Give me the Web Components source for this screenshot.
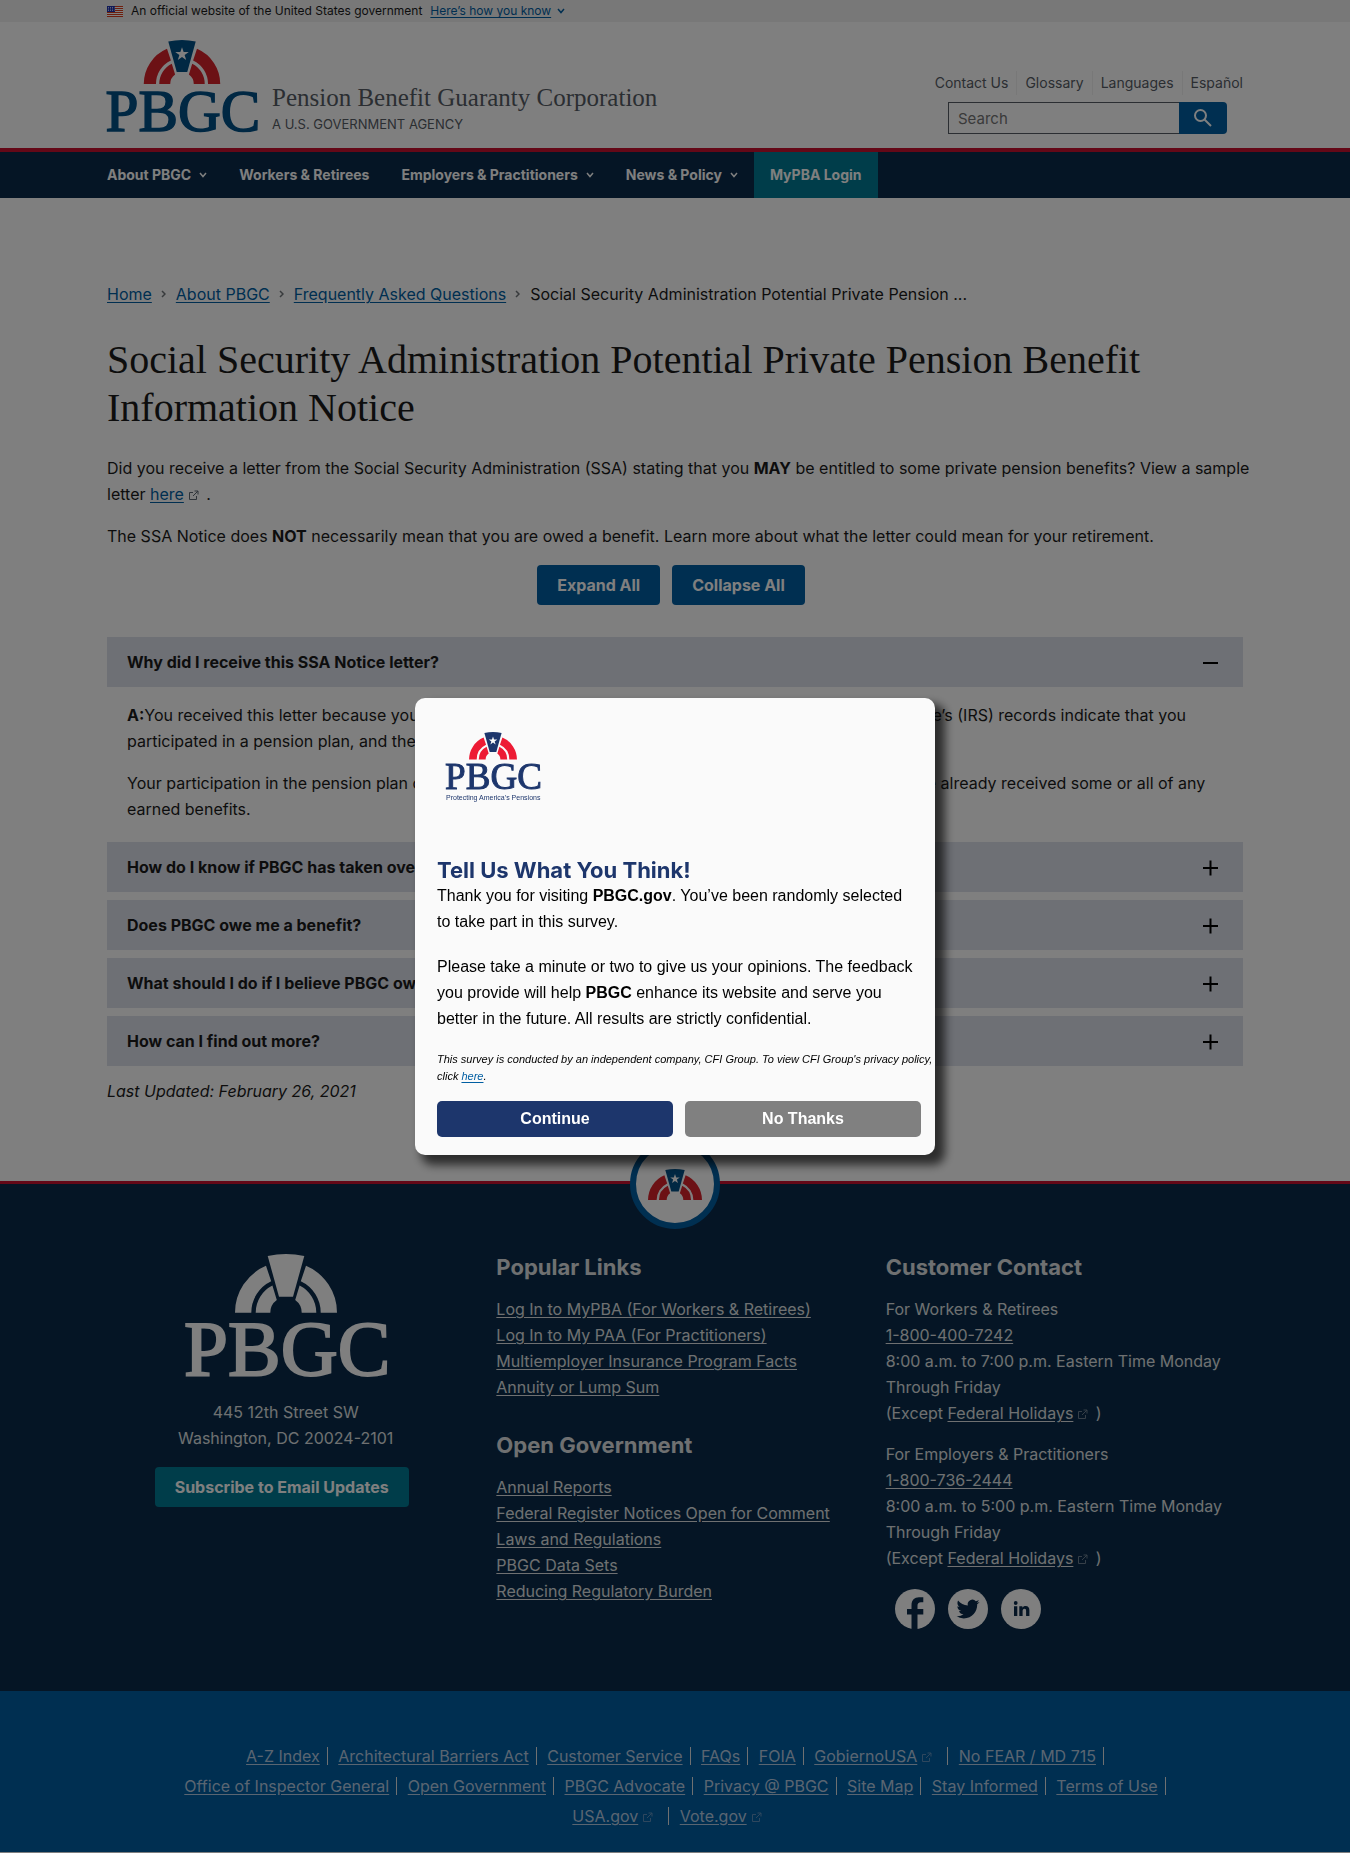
<!DOCTYPE html>
<html lang="en">
<head>
<meta charset="utf-8">
<title>Social Security Administration Potential Private Pension Benefit Information Notice | PBGC</title>
<meta name="viewport" content="width=device-width, initial-scale=1">
<style>
  :root {
    --sans: Inter, "Liberation Sans", sans-serif;
    --serif: "Liberation Serif", serif;
    --ink: #1b1b1b;
    --link: #005ea2;
    --primary: #005ea2;
    --navy: #0a2b4b;
    --teal: #007a94;
    --red: #c8102e;
  }
  body { margin: 0; background: #fff; color: var(--ink); font: 16px/26px var(--sans); }
</style>
</head>
<body>
<pbgc-page></pbgc-page>

<script>
const base = `
  *, *::before, *::after { box-sizing: border-box; }
  :host { display: block; }
  :host([hidden]) { display: none; }
  a { color: var(--link); text-underline-offset: 2px; }
  p, ul, ol, h1, h2, h3, address { margin: 0; padding: 0; }
  ul, ol { list-style: none; }
  button { font: inherit; margin: 0; cursor: pointer; }
  .wrap { max-width: 1200px; margin: 0 auto; padding: 0 32px; }
`;
function define(name, css, html, extra) {
  const t = document.createElement('template');
  t.innerHTML = `<style>${base}${css}</style>${html}`;
  customElements.define(name, class extends HTMLElement {
    constructor() {
      super();
      this.attachShadow({ mode: 'open' }).appendChild(t.content.cloneNode(true));
      if (extra) extra(this.shadowRoot, this);
    }
  });
}

/* Arch and keystone mark, shared by the full logo and the round badge. */
const arch = `
  <g class="arch">
    <path d="M49 58.7A51 51 0 0 1 80 11.8L85.2 27.3A34.7 34.7 0 0 0 65.3 58.7Z"/>
    <path d="M69.7 58.7A30.3 30.3 0 0 1 86.4 31.6L90.8 46A15.7 15.7 0 0 0 84.3 58.7Z"/>
    <path d="M151 58.7A51 51 0 0 0 120 11.8L114.8 27.3A34.7 34.7 0 0 1 134.7 58.7Z"/>
    <path d="M130.3 58.7A30.3 30.3 0 0 0 113.6 31.6L109.2 46A15.7 15.7 0 0 1 115.7 58.7Z"/>
  </g>
  <path class="key" d="M81.7 2Q100 -2 118.3 2L107 42.7H93Z"/>
  <path class="star" d="M100 9.5L102.2 16H109L103.5 20L105.6 26.5L100 22.5L94.4 26.5L96.500 20L91 16H97.800Z"/>`;
const archCss = `
  :host { --arch: #d8232b; --mark: #005087; --star: #fff; }
  svg { display: block; width: 100%; height: auto; overflow: visible; }
  .arch { fill: var(--arch); } .key { fill: var(--mark); } .star { fill: var(--star); }
  text { fill: var(--mark); stroke: var(--mark); font-family: var(--serif); }`;
define('pbgc-logo', archCss, `
  <svg viewBox="0 0 200 123" role="img" aria-label="PBGC">${arch}
    <text x="-2" y="121" font-size="79" stroke-width="2">PBGC</text></svg>`);
define('pbgc-arch', archCss, `<svg viewBox="49 0 102 59" aria-hidden="true">${arch}</svg>`);

define('external-icon', `
  :host { display: inline-block; width: 11px; height: 11px; margin: 0 3px 0 4px; color: #5f6972; vertical-align: -1px; }
  svg { display: block; }`, `
  <svg width="11" height="11" viewBox="0 0 11 11" fill="none" stroke="currentColor" role="img" aria-label="external link">
    <path d="M5 2.500H1.500V9.500H8.500V6"/><path d="M6.500 1H10V4.500M10 1L5 6"/></svg>`);

define('gov-banner', `
  :host { background: #f0f0f0; font-size: 12px; line-height: 22px; }
  .wrap { display: flex; align-items: center; }
  .flag { width: 16px; height: 11px; margin-right: 8px; }
  a { margin-left: 8px; }
  .chev { margin-left: 6px; color: var(--link); }`, `
  <div class="wrap">
    <svg class="flag" viewBox="0 0 16 11" aria-hidden="true">
      <path fill="#fff" d="M0 0H16V11H0Z"/>
      <path stroke="#db3e1f" stroke-width="1" d="M0 .5H16M0 2.500H16M0 4.500H16M0 6.500H16M0 8.500H16M0 10.500H16"/>
      <path fill="#1e33b1" d="M0 0H8V6H0Z"/>
      <path stroke="#fff" stroke-dasharray="1 1" stroke-width=".7" d="M1 1.500H7.500M1 3H7.500M1 4.500H7.500"/>
    </svg>
    <span>An official website of the United States government</span>
    <a href="#banner">Here’s how you know</a>
    <svg class="chev" width="8" height="6" viewBox="0 0 8 6" fill="none" stroke="currentColor" stroke-width="1.500"><path d="M1 1L4 4.500L7 1"/></svg>
  </div>`);

define('site-header', `
  :host { border-bottom: 4px solid var(--red); }
  .wrap { display: flex; justify-content: space-between; align-items: flex-end; padding-top: 18px; padding-bottom: 14px; }
  .brand { display: flex; align-items: flex-end; gap: 15px; color: #565c65; }
  pbgc-logo { width: 150px; margin-bottom: 2px; }
  .name { font: 25px/32px var(--serif); }
  .sub { font-size: 13px; line-height: 20px; }
  .tools { display: flex; flex-direction: column; gap: 7px; }
  ul { display: flex; font-size: 14px; line-height: 24px; }
  li + li { margin-left: 8px; padding-left: 8px; border-left: 1px solid #f0f0f0; }
  li a { color: #565c65; text-decoration: none; }
  form { display: flex; align-self: flex-end; width: 279px; margin-right: 16px; height: 32px; }
  label { position: absolute; width: 1px; height: 1px; overflow: hidden; clip-path: inset(50%); }
  input { flex: 1; min-width: 0; margin: 0; padding: 0 9px; border: 1px solid #565c65; border-right: 0; border-radius: 0;
          font: 15px var(--sans); appearance: none; background: #fff; }
  input::placeholder { color: #757575; opacity: 1; }
  button { width: 48px; padding: 0; border: 0; border-radius: 0 4px 4px 0; background: var(--primary); color: #fff; display: grid; place-items: center; }`, `
  <div class="wrap">
    <div class="brand">
      <pbgc-logo></pbgc-logo>
      <div><div class="name">Pension Benefit Guaranty Corporation</div><div class="sub">A U.S. GOVERNMENT AGENCY</div></div>
    </div>
    <div class="tools">
      <ul>
        <li><a href="#contact">Contact Us</a></li><li><a href="#glossary">Glossary</a></li>
        <li><a href="#languages">Languages</a></li><li><a href="#es" lang="es">Español</a></li>
      </ul>
      <form role="search">
        <label for="q">Search</label>
        <input id="q" type="search" placeholder="Search">
        <button type="submit" aria-label="Search">
          <svg width="20" height="20" viewBox="0 0 20 20" fill="none" stroke="currentColor" stroke-width="2"><circle cx="7.500" cy="7.500" r="5.500"/><path d="M11.500 11.500L18 18"/></svg>
        </button>
      </form>
    </div>
  </div>`);

const chev = `<svg width="8" height="6" viewBox="0 0 8 6" fill="none" stroke="currentColor" stroke-width="1.500" aria-hidden="true"><path d="M1 1L4 4.500L7 1"/></svg>`;
define('site-nav', `
  :host { background: var(--navy); }
  .wrap { display: flex; padding: 0 16px; }
  button, a { display: flex; align-items: center; gap: 8px; height: 46px; padding: 0 16px; border: 0; background: none;
              color: #fff; font-size: 14px; font-weight: 700; text-decoration: none; }
  .cta { background: var(--teal); }`, `
  <nav class="wrap">
    <button type="button">About PBGC ${chev}</button>
    <a href="#workers">Workers &amp; Retirees</a>
    <button type="button">Employers &amp; Practitioners ${chev}</button>
    <button type="button">News &amp; Policy ${chev}</button>
    <a class="cta" href="#mypba">MyPBA Login</a>
  </nav>`);

define('bread-crumb', `
  ol { display: flex; }
  li { display: flex; align-items: center; }
  svg { margin: 0 10px 0 9px; color: #71767a; }`, `
  <nav aria-label="Breadcrumbs"><ol>
    <li><a href="#home">Home</a></li><li><a href="#about">About PBGC</a></li>
    <li><a href="#faq">Frequently Asked Questions</a></li>
    <li aria-current="page">Social Security Administration Potential Private Pension ...</li>
  </ol></nav>`, root => {
    root.querySelectorAll('li + li').forEach(li => li.insertAdjacentHTML('afterbegin',
      '<svg width="5" height="8" viewBox="0 0 5 8" fill="none" stroke="currentColor" stroke-width="1.500"><path d="M1 1L4 4L1 7"/></svg>'));
  });

/* Accordion section: title comes from the attribute, the answer from the slot. */
define('faq-item', `
  h3 { font-size: 16px; }
  button { display: flex; justify-content: space-between; align-items: center; width: 100%; height: 50px;
           padding: 0 24px 1px 20px; border: 0; background: #dce0eb; color: var(--ink); font-weight: 700; text-align: left; }
  .body { display: none; flex-direction: column; gap: 16px; padding: 15px 20px 12px; }
  :host([open]) .body { display: flex; }
  :host([open]) .bar { display: none; }
  ::slotted(p) { margin: 0; }`, `
  <h3><button type="button" aria-controls="body"><span class="t"></span>
    <svg width="18" height="18" viewBox="0 0 18 18" fill="none" stroke="#000" stroke-width="2" aria-hidden="true"><path d="M2 10H17"/><path class="bar" d="M9.500 2.500V17.500"/></svg>
  </button></h3>
  <div class="body" id="body"><slot></slot></div>`, (root, host) => {
    const b = root.querySelector('button');
    root.querySelector('.t').textContent = host.getAttribute('heading') || '';
    b.setAttribute('aria-expanded', host.hasAttribute('open'));
    b.addEventListener('click', () => { host.toggleAttribute('open'); b.setAttribute('aria-expanded', host.hasAttribute('open')); });
  });

define('page-article', `
  .wrap { padding-top: 83px; padding-bottom: 77px; }
  h1 { margin: 29px 0 23px; font: 40px/48px var(--serif); }
  .lead { margin: 0 -16px 16px 0; }
  .actions { display: flex; justify-content: center; gap: 12px; margin: 0 8px 32px 0; }
  .actions button { height: 40px; padding: 0 20px; border: 0; border-radius: 4px; background: var(--primary); color: #fff; font-weight: 700; }
  .faq { display: flex; flex-direction: column; gap: 8px; margin-bottom: 12px; }`, `
  <main class="wrap">
    <bread-crumb></bread-crumb>
    <h1>Social Security Administration Potential Private Pension Benefit Information Notice</h1>
    <p class="lead">Did you receive a letter from the Social Security Administration (SSA) stating that you <strong>MAY</strong> be entitled to some private pension benefits? View a sample letter <a href="#sample">here</a><external-icon></external-icon> .</p>
    <p class="lead">The SSA Notice does <strong>NOT</strong> necessarily mean that you are owed a benefit. Learn more about what the letter could mean for your retirement.</p>
    <div class="actions"><button type="button" class="ex">Expand All</button><button type="button" class="co">Collapse All</button></div>
    <div class="faq">
      <faq-item open heading="Why did I receive this SSA Notice letter?">
        <p><strong>A:</strong>You received this letter because you applied for SSA retirement benefits and the Internal Revenue Service’s (IRS) records indicate that you participated in a pension plan, and the plan may owe you a benefit.</p>
        <p>Your participation in the pension plan does not necessarily mean that you are owed benefits. You may have already received some or all of any earned benefits.</p>
      </faq-item>
      <faq-item heading="How do I know if PBGC has taken over my pension plan?"></faq-item>
      <faq-item heading="Does PBGC owe me a benefit?"></faq-item>
      <faq-item heading="What should I do if I believe PBGC owes me a benefit?"></faq-item>
      <faq-item heading="How can I find out more?"></faq-item>
    </div>
    <p><em>Last Updated: February 26, 2021</em></p>
  </main>`, root => {
    const all = on => root.querySelectorAll('faq-item').forEach(i => i.toggleAttribute('open', on));
    root.querySelector('.ex').addEventListener('click', () => all(true));
    root.querySelector('.co').addEventListener('click', () => all(false));
  });

define('site-footer', `
  :host { position: relative; border-top: 3px solid var(--red); background: var(--navy); color: #dfe1e2; }
  .badge { position: absolute; top: -45px; left: 50%; margin-left: -45px; width: 90px; height: 90px; display: grid; place-items: center;
           border: 6px solid var(--primary); border-radius: 50%; background: #fff; }
  pbgc-arch { width: 54px; }
  .wrap { display: grid; grid-template-columns: repeat(3, 1fr); gap: 32px; padding-top: 69px; padding-bottom: 62px; }
  a { color: #dfe1e2; }
  h2 { font-size: 22px; line-height: 28px; font-weight: 700; margin-bottom: 15px; }
  .org { display: flex; flex-direction: column; align-items: center; text-align: center; }
  .org pbgc-logo { width: 200px; --arch: #fff; --mark: #fff; --star: #fff; margin: 1px 0 22px; }
  address { font-style: normal; margin-bottom: 16px; }
  .org button { height: 40px; margin-right: 8px; padding: 0 20px; border: 0; border-radius: 4px; background: var(--teal); color: #fff; font-weight: 700; }
  .links h2:nth-of-type(2) { margin-top: 31px; }
  .call p { margin-bottom: 15px; }
  .social { display: flex; gap: 13px; padding: 3px 9px 0; }
  .social a { display: block; color: #fff; height: 40px; }
  external-icon { color: #6d7f90; }`, `
  <div class="badge"><pbgc-arch></pbgc-arch></div>
  <div class="wrap">
    <section class="org">
      <pbgc-logo></pbgc-logo>
      <address>445 12th Street SW<br>Washington, DC 20024-2101</address>
      <button type="button">Subscribe to Email Updates</button>
    </section>
    <section class="links">
      <h2>Popular Links</h2>
      <ul>
        <li><a href="#1">Log In to MyPBA (For Workers &amp; Retirees)</a></li>
        <li><a href="#2">Log In to My PAA (For Practitioners)</a></li>
        <li><a href="#3">Multiemployer Insurance Program Facts</a></li>
        <li><a href="#4">Annuity or Lump Sum</a></li>
      </ul>
      <h2>Open Government</h2>
      <ul>
        <li><a href="#5">Annual Reports</a></li>
        <li><a href="#6">Federal Register Notices Open for Comment</a></li>
        <li><a href="#7">Laws and Regulations</a></li>
        <li><a href="#8">PBGC Data Sets</a></li>
        <li><a href="#9">Reducing Regulatory Burden</a></li>
      </ul>
    </section>
    <section class="call">
      <h2>Customer Contact</h2>
      <p>For Workers &amp; Retirees<br><a href="tel:18004007242">1-800-400-7242</a><br>8:00 a.m. to 7:00 p.m. Eastern Time Monday Through Friday<br>(Except <a href="#h1">Federal Holidays</a><external-icon></external-icon> )</p>
      <p>For Employers &amp; Practitioners<br><a href="tel:18007362444">1-800-736-2444</a><br>8:00 a.m. to 5:00 p.m. Eastern Time Monday Through Friday<br>(Except <a href="#h2">Federal Holidays</a><external-icon></external-icon> )</p>
      <div class="social">
        <a href="#fb" aria-label="Facebook"><svg width="40" height="40" viewBox="0 0 40 40"><circle cx="20" cy="20" r="20" fill="currentColor"/><path fill="var(--navy)" d="M16.500 40V25.500H12V20H16.500V16.500C16.500 11 19.500 8.300 24 8.300H28.300V13.300H26C23.500 13.300 22.500 14.500 22.500 16.800V20H28.300V25.500H22.500V40Z"/></svg></a>
        <a href="#tw" aria-label="Twitter"><svg width="40" height="40" viewBox="0 0 40 40"><circle cx="20" cy="20" r="20" fill="currentColor"/><path fill="var(--navy)" transform="translate(8.500 8.500) scale(.96)" d="M23.953 4.570a10 10 0 01-2.825.775 4.958 4.958 0 002.163-2.723c-.951.555-2.005.959-3.127 1.184a4.920 4.920 0 00-8.384 4.482C7.690 8.095 4.067 6.130 1.640 3.162a4.822 4.822 0 00-.666 2.475c0 1.710.870 3.213 2.188 4.096a4.904 4.904 0 01-2.228-.616v.060a4.923 4.923 0 003.946 4.827 4.996 4.996 0 01-2.212.085 4.936 4.936 0 004.604 3.417 9.867 9.867 0 01-6.102 2.105c-.390 0-.779-.023-1.170-.067a13.995 13.995 0 007.557 2.209c9.053 0 13.998-7.496 13.998-13.985 0-.210 0-.420-.015-.630A9.935 9.935 0 0024 4.590z"/></svg></a>
        <a href="#li" aria-label="LinkedIn"><svg width="40" height="40" viewBox="0 0 40 40"><circle cx="20" cy="20" r="20" fill="currentColor"/><g fill="var(--navy)"><circle cx="14.700" cy="14" r="1.900"/><path d="M13 17.300H16.300V27H13ZM18.300 17.300H21.400V18.700C22 17.700 23.200 17 24.600 17C27.300 17 28.400 18.700 28.400 21.400V27H25.100V21.900C25.100 20.600 24.700 19.800 23.500 19.800C22.100 19.800 21.600 20.800 21.600 22.100V27H18.300Z"/></g></svg></a>
      </div>
    </section>
  </div>`);

define('footer-links', `
  :host { background: var(--primary); padding: 50px 0 21px; text-align: center; }
  ul { max-width: 1040px; margin: 0 auto; padding-right: 6px; line-height: 30px; }
  li { display: inline; }
  .i { display: inline-block; line-height: 18px; padding-right: 7px; margin-left: 6px; border-right: 1px solid #dfe1e2; }
  li:last-child .i { border-color: transparent; }
  a { color: #b4cbe2; }
  external-icon { color: #5d8fbd; margin-right: 8px; }`, `<ul></ul>`, root => {
    const names = ['A-Z Index', 'Architectural Barriers Act', 'Customer Service', 'FAQs', 'FOIA', '*GobiernoUSA', 'No FEAR / MD 715',
      'Office of Inspector General', 'Open Government', 'PBGC Advocate', 'Privacy @ PBGC', 'Site Map', 'Stay Informed', 'Terms of Use', '*USA.gov', '*Vote.gov'];
    root.querySelector('ul').innerHTML = names.map(n => `<li><span class="i"><a href="#f">${n.replace('*', '')}</a>${n[0] === '*' ? '<external-icon></external-icon>' : ''}</span></li>`).join(' ');
  });

define('survey-dialog', `
  :host { position: fixed; inset: 0; display: grid; place-items: center; background: rgba(0,0,0,.5); --sheet: "Liberation Sans", sans-serif; }
  .box { width: 520px; max-width: 100%; padding: 34px 14px 18px 22px; border-radius: 10px; background: #fafafa; color: #000;
         font-family: var(--sheet); box-shadow: 8px 8px 10px 2px rgba(0,0,0,.65); }
  figure { margin: 0 0 53px 9px; width: 94px; color: #1d366c; }
  figure pbgc-logo { --arch: #ed1b34; --mark: #1d366c; --star: #fafafa; }
  figcaption { font-size: 7px; line-height: 12px; margin-top: 3px; white-space: nowrap; }
  h2 { font: 700 22px/26px var(--sans); color: #1d366c; }
  p { margin-bottom: 19px; padding-right: 6px; }
  .note { font-size: 11px; line-height: 17px; font-style: italic; margin: 0 -12px 16px 0; padding: 0; }
  .row { display: flex; gap: 12px; }
  .row button { flex: 1; height: 36px; padding: 0; border: 0; border-radius: 5px; background: #1d366c; color: #fff; font-weight: 700; }
  .row .no { background: #808080; }`, `
  <div class="box" role="dialog" aria-modal="true" aria-labelledby="t">
    <figure><pbgc-logo></pbgc-logo><figcaption>Protecting America’s Pensions</figcaption></figure>
    <h2 id="t">Tell Us What You Think!</h2>
    <p>Thank you for visiting <b>PBGC.gov</b>. You’ve been randomly selected to take part in this survey.</p>
    <p>Please take a minute or two to give us your opinions. The feedback you provide will help <b>PBGC</b> enhance its website and serve you better in the future. All results are strictly confidential.</p>
    <p class="note">This survey is conducted by an independent company, CFI Group. To view CFI Group's privacy policy, click <a href="#privacy">here</a>.</p>
    <div class="row"><button type="button">Continue</button><button type="button" class="no">No Thanks</button></div>
  </div>`, (root, host) => {
    root.querySelectorAll('button').forEach(b => b.addEventListener('click', () => host.remove()));
  });

define('pbgc-page', ``, `
  <gov-banner></gov-banner>
  <header><site-header></site-header><site-nav></site-nav></header>
  <page-article></page-article>
  <footer><site-footer></site-footer><footer-links></footer-links></footer>
  <survey-dialog></survey-dialog>`);
</script>
</body>
</html>
